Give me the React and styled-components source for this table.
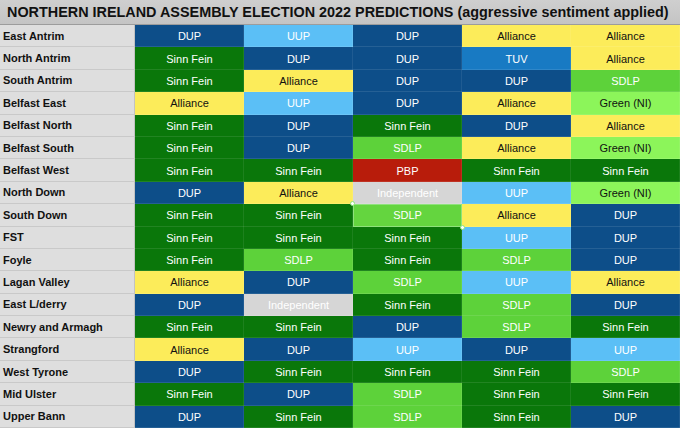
import React from "react";
import styled, { createGlobalStyle, css } from "styled-components";

const Global = createGlobalStyle`
  html, body { margin: 0; padding: 0; background: #ffffff; }
  body { font-family: "Liberation Sans", Arial, Helvetica, sans-serif; }
  * { box-sizing: border-box; }
`;

const PARTY = {
  "DUP": { bg: "#0d4e89", fg: "#ffffff" },
  "UUP": { bg: "#5bbff6", fg: "#ffffff" },
  "Sinn Fein": { bg: "#0a770a", fg: "#ffffff" },
  "Alliance": { bg: "#fcec5a", fg: "#111111" },
  "SDLP": { bg: "#5dd23a", fg: "#ffffff" },
  "Green (NI)": { bg: "#8cf55a", fg: "#111111" },
  "TUV": { bg: "#187ac3", fg: "#ffffff" },
  "PBP": { bg: "#b81c0b", fg: "#ffffff" },
  "Independent": { bg: "#d6d6d6", fg: "#ffffff" },
};

const ROWS = [
  ["East Antrim", ["DUP", "UUP", "DUP", "Alliance", "Alliance"]],
  ["North Antrim", ["Sinn Fein", "DUP", "DUP", "TUV", "Alliance"]],
  ["South Antrim", ["Sinn Fein", "Alliance", "DUP", "DUP", "SDLP"]],
  ["Belfast East", ["Alliance", "UUP", "DUP", "Alliance", "Green (NI)"]],
  ["Belfast North", ["Sinn Fein", "DUP", "Sinn Fein", "DUP", "Alliance"]],
  ["Belfast South", ["Sinn Fein", "DUP", "SDLP", "Alliance", "Green (NI)"]],
  ["Belfast West", ["Sinn Fein", "Sinn Fein", "PBP", "Sinn Fein", "Sinn Fein"]],
  ["North Down", ["DUP", "Alliance", "Independent", "UUP", "Green (NI)"]],
  ["South Down", ["Sinn Fein", "Sinn Fein", "SDLP", "Alliance", "DUP"]],
  ["FST", ["Sinn Fein", "Sinn Fein", "Sinn Fein", "UUP", "DUP"]],
  ["Foyle", ["Sinn Fein", "SDLP", "Sinn Fein", "SDLP", "DUP"]],
  ["Lagan Valley", ["Alliance", "DUP", "SDLP", "UUP", "Alliance"]],
  ["East L/derry", ["DUP", "Independent", "Sinn Fein", "SDLP", "DUP"]],
  ["Newry and Armagh", ["Sinn Fein", "Sinn Fein", "DUP", "SDLP", "Sinn Fein"]],
  ["Strangford", ["Alliance", "DUP", "UUP", "DUP", "UUP"]],
  ["West Tyrone", ["DUP", "Sinn Fein", "Sinn Fein", "Sinn Fein", "SDLP"]],
  ["Mid Ulster", ["Sinn Fein", "DUP", "SDLP", "Sinn Fein", "Sinn Fein"]],
  ["Upper Bann", ["DUP", "Sinn Fein", "SDLP", "Sinn Fein", "DUP"]],
];

const Page = styled.div`
  width: 680px;
  height: 428px;
  display: flex;
  flex-direction: column;
  overflow: hidden;
  background: #ffffff;
`;

const TitleBar = styled.div`
  height: 25px;
  flex: 0 0 25px;
  display: flex;
  align-items: center;
  padding-left: 7px;
  background: linear-gradient(#cfcfcf, #c4c4c4);
  border-bottom: 1px solid #9c9c9c;
  font-weight: bold;
  font-size: 14.4px;
  color: #111111;
  white-space: nowrap;
`;

const Table = styled.div`
  flex: 1;
  display: grid;
  grid-template-columns: 135px repeat(5, 1fr);
  grid-template-rows: repeat(18, 1fr);
`;

const Label = styled.div`
  display: flex;
  align-items: center;
  padding-left: 3px;
  background: #dedede;
  border-bottom: 1px solid #c9c9c9;
  border-right: 1px solid #c2c2c2;
  font-weight: bold;
  font-size: 11px;
  color: #111111;
  white-space: nowrap;
`;

const Cell = styled.div`
  position: relative;
  display: flex;
  align-items: center;
  justify-content: center;
  background: ${(p) => p.$bg};
  color: ${(p) => p.$fg};
  font-size: 11px;
  white-space: nowrap;
  box-shadow: inset 0 -1px 0 rgba(255, 255, 255, 0.1), inset -1px 0 0 rgba(255, 255, 255, 0.08);
  ${(p) =>
    p.$selected &&
    css`
      background: #64d53f;
      box-shadow: inset 0 0 0 1px #8fe27c;
      z-index: 1;
    `}
`;

const Handle = styled.span`
  position: absolute;
  width: 5px;
  height: 5px;
  border-radius: 50%;
  background: #ffffff;
  border: 1px solid #8fe27c;
  ${(p) =>
    p.$pos === "tl"
      ? css`
          top: -3px;
          left: -3px;
        `
      : css`
          bottom: -3px;
          right: -3px;
        `}
`;

export default function App() {
  return (
    <>
      <Global />
      <Page>
        <TitleBar>NORTHERN IRELAND ASSEMBLY ELECTION 2022 PREDICTIONS (aggressive sentiment applied)</TitleBar>
        <Table>
          {ROWS.map(([name, parties], r) => (
            <React.Fragment key={name}>
              <Label>{name}</Label>
              {parties.map((p, c) => {
                const selected = r === 8 && c === 2;
                return (
                  <Cell key={c} $bg={PARTY[p].bg} $fg={PARTY[p].fg} $selected={selected}>
                    {p}
                    {selected && (
                      <>
                        <Handle $pos="tl" />
                        <Handle $pos="br" />
                      </>
                    )}
                  </Cell>
                );
              })}
            </React.Fragment>
          ))}
        </Table>
      </Page>
    </>
  );
}
